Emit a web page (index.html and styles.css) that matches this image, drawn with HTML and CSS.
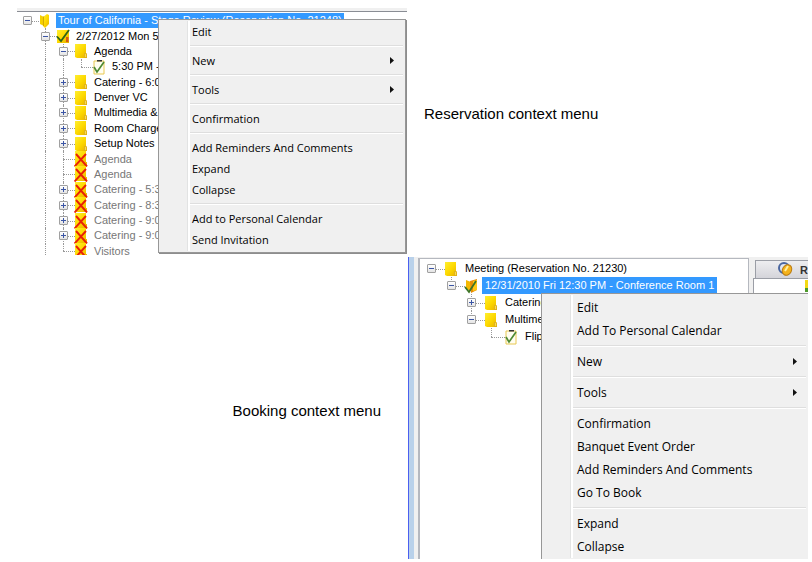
FILE: index.html
```html
<!DOCTYPE html>
<html lang="en">
<head>
<meta charset="utf-8">
<title>Context menus</title>
<link rel="stylesheet" href="styles.css">
</head>
<body>
<svg class="defs" aria-hidden="true">
  <defs>
    <linearGradient id="gold" x1="0" y1="0" x2="1" y2="1">
      <stop offset="0" stop-color="#ffee30"/><stop offset=".5" stop-color="#fdd900"/><stop offset="1" stop-color="#e8b000"/>
    </linearGradient>
  </defs>
  <symbol id="folder" viewBox="0 0 14 16">
    <path d="M1 1h11v10h1v4H3L1 14z" fill="url(#gold)"/><path d="M10.500 10.500h2v4h-2z" fill="#f8dc50" stroke="#d9a818" stroke-width=".7"/>
  </symbol>
  <symbol id="open" viewBox="0 0 14 16">
    <path d="M2 2l4 2v9l-4-2z" fill="#f5cf00"/><path d="M5 4l4-3 2 1v9l-4 4-2-2z" fill="url(#gold)"/><path d="M5.500 3.500v9.500" stroke="#c99a00" stroke-width=".8"/>
  </symbol>
  <symbol id="booked" viewBox="0 0 14 16">
    <path d="M1 2h12v13H1z" fill="url(#gold)"/><path d="M10 9h2.500v5H10z" fill="#d65a14"/><path d="M1 8.500l4 4.500 8-11" fill="none" stroke="#2c6417" stroke-width="1.800"/>
  </symbol>
  <symbol id="opened" viewBox="0 0 14 16">
    <path d="M2 2l5 2v9l-5-2z" fill="#f5b800"/><path d="M6 3l7-2v11l-6 3z" fill="#e88d05"/><path d="M9 3l4-1v10l-4 1z" fill="#ffc912"/><path d="M1 9l4 5 7-11" fill="none" stroke="#3c7424" stroke-width="1.800"/>
  </symbol>
  <symbol id="note" viewBox="0 0 14 16">
    <path d="M2 2h10v13H2z" fill="#fffdf0" stroke="#e8c850"/><path d="M5 1h5v1.500H5z" fill="#333"/><path d="M2 8l3 5 7-10" fill="none" stroke="#4f8a34" stroke-width="1.700"/>
  </symbol>
  <symbol id="cancelled" viewBox="0 0 14 16">
    <path d="M1 0h11v11h1v4H1z" fill="url(#gold)"/><path d="M.500 15.500L12 3M2 3l11 12.500" fill="none" stroke="#e82008" stroke-width="1.900"/>
  </symbol>
</svg>
<main id="page"></main>
<script src="app.js"></script>
</body>
</html>
```
FILE: styles.css
```css
* { box-sizing: border-box; }
body { margin: 0; background: #fff; color: #000; font-family: "Liberation Sans", Arial, sans-serif; }
.defs { position: absolute; width: 0; height: 0; }
main { padding: 8px 4px 0 17px; }
figure { display: grid; margin: 0; }
.reservation { grid-template-columns: minmax(0, 390fr) minmax(0, 401fr); }
.booking { grid-template-columns: minmax(0, 391fr) minmax(0, 400fr); margin-top: 2px; }
figcaption { font-size: 15px; line-height: 20px; white-space: nowrap; }
.reservation figcaption { padding: 96px 0 0 17px; }
.booking figcaption { padding: 144px 27px 0 0; text-align: right; }
.shot { position: relative; overflow: hidden; }
.reservation .shot { height: 247px; background: #f0f0f0; padding-top: 3px; }
.reservation .pane { border-top: 1px solid #8a8d94; background: #fff; padding: 1px 0 0 1px; }
.booking .shot { display: flex; height: 302px; background: #f0f0f0; border-left: 1px solid #4b5ff0; }
.frame { width: 5px; background: #b9d1ea; }
.booking .pane { flex: 0 1 331px; margin: 1px 0 0 4px; padding: 1px 0 0 1px; border: 2px solid #b5b8bf; border-width: 1px 1px 0 2px; background: #fff; }
.tree { list-style: none; margin: 0; padding: 0; display: grid; grid-auto-rows: 1fr; font-size: 11px; white-space: nowrap; }
.reservation .tree { --step: 18px; height: 246px; }
.booking .tree { --step: 20px; height: 85px; }
.tree li { display: flex; align-items: center; min-height: 0; }
.cell { position: relative; flex: none; width: var(--step); align-self: stretch; display: flex; align-items: center; justify-content: center; }
.line::before, .half::before { content: ""; position: absolute; left: 50%; top: 0; bottom: 0; border-left: 1px dotted #999; }
.half::before { bottom: 50%; }
.branch::after { content: ""; position: absolute; top: 50%; left: 50%; width: 100%; border-top: 1px dotted #999; }
.toggle { position: relative; z-index: 1; width: 9px; height: 9px; padding: 0; border: 1px solid #a0a0a0; border-radius: 1px; background: linear-gradient(#fff, #e4e4e4); display: grid; place-items: center; }
.toggle svg { width: 7px; height: 7px; }
.icon svg { position: relative; z-index: 1; width: 14px; height: 16px; flex: none; }
.label { margin-left: 2px; padding: 0 2px; line-height: 15px; }
.off .label { color: #777; }
.selected .label { background: #3399ff; color: #fff; }
.booking .label { margin-left: 1px; padding: 0 3px; line-height: 17px; }
.menu { position: absolute; z-index: 2; border: 1px solid #979797; background: #f0f0f0; font-family: "Open Sans", "Noto Sans", sans-serif; color: #000; }
.reservation .menu { top: 11px; left: 141px; right: 1px; padding: 1px 2px 2px; font-size: 11px; box-shadow: 1px 1px 0 0 #8d8d8d; }
.booking .menu { top: 36px; left: 132px; right: 0; bottom: 0; padding: 2px 2px 0; border-width: 1px 0 0 1px; font-size: 12px; }
.menu::before { content: ""; position: absolute; left: 28px; top: 1px; bottom: 1px; width: 2px; background: #fff; border-left: 1px solid #e2e3e3; }
.menu button { display: flex; align-items: center; justify-content: space-between; width: 100%; height: 21px; border: 0; background: none; color: inherit; font: inherit; padding: 0 9px 0 31px; white-space: nowrap; }
.booking .menu button { height: 23px; padding-left: 33px; }
.menu button svg { width: 4px; height: 7px; }
.menu hr { height: 2px; margin: 3px 0 3px 27px; border: 0; border-top: 1px solid #dedede; background: #fff; }
.tabs { flex: 1; min-width: 0; padding: 3px 0 0 6px; }
.tab { display: flex; align-items: center; gap: 7px; width: 100%; height: 18px; padding: 0 0 0 22px; border: 1px solid #9b9ea6; border-width: 1px 0 0 1px; background: linear-gradient(#eeeef0, #d4d4da); font: bold 11px "Liberation Sans", Arial, sans-serif; color: #333; overflow: hidden; }
.tab svg { width: 15px; height: 15px; flex: none; }
.sheet { height: 18px; margin-left: -2px; border: 1px solid #9b9ea6; border-right: 0; background: #fff; display: flex; justify-content: flex-end; overflow: hidden; }
```
FILE: app.js
```js
const toggleIcon = sign => `<svg viewBox="0 0 7 7"><path d="M1 3.500h5${sign === '+' ? 'M3.500 1v5' : ''}" stroke="#3b55a5" fill="none"/></svg>`;

// Each row: guide cells, icon, label, classes. Guides: "." blank, "|" line, "+"/"-" toggle, "L" last branch, "T" branch.
function row([guides, icon, label, cls = '', below = '']) {
  const cells = [...guides].map((g, i) => {
    if (g === '.') return '<span class="cell"></span>';
    if (g === '|') return '<span class="cell line"></span>';
    if (g === 'L') return '<span class="cell half branch"></span>';
    if (g === 'T') return '<span class="cell line branch"></span>';
    const line = i === 0 ? '' : below === 'end' ? 'half' : 'line';
    return `<span class="cell ${line} branch"><button class="toggle" aria-label="${g === '+' ? 'Expand' : 'Collapse'} ${label.replace('&', '&amp;')}">${toggleIcon(g)}</button></span>`;
  }).join('');
  return `<li class="${cls}">${cells}<span class="cell icon"><svg><use href="#${icon}"/></svg></span><span class="label">${label.replace('&', '&amp;')}</span></li>`;
}
const tree = rows => `<ul class="tree">${rows.map(row).join('')}</ul>`;
const arrow = '<svg viewBox="0 0 4 7"><path d="M0 0l4 3.500-4 3.500z" fill="#111"/></svg>';
const menu = items => `<div class="menu" role="menu">${items.map(t => t === '-' ? '<hr>' :
  `<button role="menuitem">${t.replace('>', '')}${t.endsWith('>') ? arrow : ''}</button>`).join('')}</div>`;

const reservation = [
  ['-', 'open', 'Tour of California - Stage Review (Reservation No. 21248)', 'selected'],
  ['.-', 'booked', '2/27/2012 Mon 5'],
  ['.|-', 'folder', 'Agenda'],
  ['.||L', 'note', '5:30 PM -'],
  ['.|+', 'folder', 'Catering - 6:00'],
  ['.|+', 'folder', 'Denver VC'],
  ['.|+', 'folder', 'Multimedia & E'],
  ['.|+', 'folder', 'Room Charge'],
  ['.|+', 'folder', 'Setup Notes'],
  ['.|T', 'cancelled', 'Agenda', 'off'],
  ['.|T', 'cancelled', 'Agenda', 'off'],
  ['.|+', 'cancelled', 'Catering - 5:30', 'off'],
  ['.|+', 'cancelled', 'Catering - 8:30', 'off'],
  ['.|+', 'cancelled', 'Catering - 9:00', 'off'],
  ['.|+', 'cancelled', 'Catering - 9:00', 'off'],
  ['.|L', 'cancelled', 'Visitors', 'off']
];
const booking = [
  ['-', 'folder', 'Meeting (Reservation No. 21230)'],
  ['.-', 'opened', '12/31/2010 Fri 12:30 PM - Conference Room 1', 'selected', 'end'],
  ['..+', 'folder', 'Catering'],
  ['..-', 'folder', 'Multime', '', 'end'],
  ['...L', 'note', 'Flip']
];
document.getElementById('page').innerHTML = `
<figure class="reservation">
  <div class="shot"><div class="pane">${tree(reservation)}</div>
    ${menu(['Edit', '-', 'New>', '-', 'Tools>', '-', 'Confirmation', '-', 'Add Reminders And Comments', 'Expand', 'Collapse', '-', 'Add to Personal Calendar', 'Send Invitation'])}
  </div>
  <figcaption>Reservation context menu</figcaption>
</figure>
<figure class="booking">
  <figcaption>Booking context menu</figcaption>
  <div class="shot"><div class="frame"></div><div class="pane">${tree(booking)}</div>
    <div class="tabs"><button class="tab"><svg viewBox="0 0 15 15"><circle cx="6" cy="6" r="5" fill="#dfe6f2" stroke="#4a66a0" stroke-width="2"/><ellipse cx="9" cy="8" rx="4.500" ry="5.500" transform="rotate(30 9 8)" fill="#f4b21c" stroke="#b97a10"/><path d="M7 9l3-5" stroke="#fff0a0" stroke-width="2"/></svg>R</button>
      <div class="sheet"><svg width="3" height="16"><path d="M0 1h3v8H0z" fill="#f3d913"/><path d="M0 9h3v4H0z" fill="#4c9a2a"/></svg></div></div>
    ${menu(['Edit', 'Add To Personal Calendar', '-', 'New>', '-', 'Tools>', '-', 'Confirmation', 'Banquet Event Order', 'Add Reminders And Comments', 'Go To Book', '-', 'Expand', 'Collapse'])}
  </div>
</figure>`;
```
